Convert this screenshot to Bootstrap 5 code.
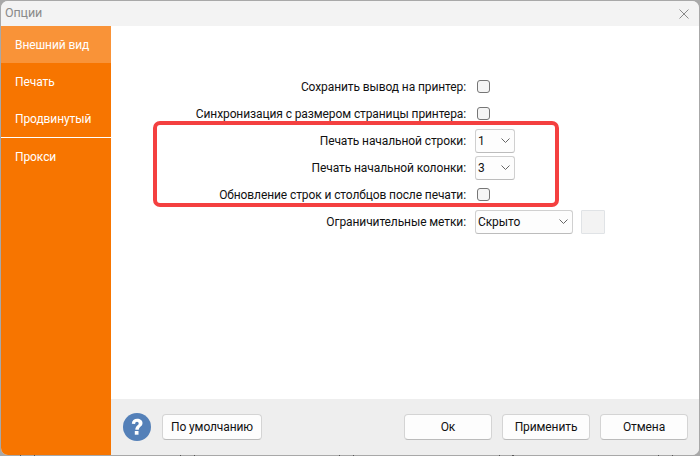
<!DOCTYPE html>
<html lang="ru"><head><meta charset="utf-8">
<link href="https://cdn.jsdelivr.net/npm/bootstrap@5.3.0/dist/css/bootstrap.min.css" rel="stylesheet">
<style>
html,body{width:700px;height:456px;overflow:hidden;margin:0}
body{background:repeating-linear-gradient(90deg,#a8a8a8 0 20px,#555 20px 21px,#a8a8a8 21px 34px,#555 34px 35px,#a8a8a8 35px 159.5px) left bottom/100% 1px no-repeat,#a8a8a8;font-family:Roboto,"Open Sans",sans-serif;font-size:12px;letter-spacing:-.1px;color:#111}
.win{position:absolute;left:1px;top:1px;width:698px;height:454px;border-radius:7px;overflow:hidden;background:#f3f3f3;flex-direction:column}
.tbar{height:25px;padding-left:4px;color:#8a8a8a;font-size:12.500px;background:#f3f3f3;flex:none}
.xbtn{width:30px}
.side{width:110px;background:#f77500;color:#fff;flex:none}
.sitem{height:37px;padding-left:14px}
.sitem.on{background:#f99338}
.sitem.sep{height:38px;border-top:1px solid #fff}
.pane{background:#fff;position:relative}
.formgrid{padding-top:47px}
.frow{height:27px}
.lbl{width:355px;text-align:right;line-height:1}
.ctrl{margin-left:9px;display:flex;align-items:center}
.cb{width:13px;height:13px;border:1px solid #767676;border-radius:3px;background:#f5f5f5;margin-left:2px}
.sel{height:24px;border:1px solid #d0d0d0;border-bottom-color:#bcbcbc;border-radius:3px;background:#fdfdfd;padding:0 4px 0 2px;color:#111}
.sel svg{margin-left:auto}
.w40{width:40px}.w98{width:98px}
.swatch{width:24px;height:24px;background:#f3f3f3;border:1px solid #e0e3e6;margin-left:8px;border-radius:1px}
.redbox{position:absolute;left:42px;top:95px;width:406px;height:86px;border:4px solid #f44040;border-radius:7px;pointer-events:none}
.foot{height:56px;background:#eee;padding:0 11px 0 12px;flex:none}
.fbtn{height:26px;background:#fdfdfd;border:1px solid #d4d4d4;border-bottom-color:#bbb;border-radius:4px;padding:0;font-size:12px;letter-spacing:-.1px;color:#111;display:flex;align-items:center;justify-content:center}
.w100{width:100px}.w88{width:88px}
.pill{margin-left:11px}
.gap9{gap:10px}
</style></head><body>
<div class="win d-flex">
  <div class="tbar d-flex align-items-center justify-content-between"><span>Опции</span>
    <span class="xbtn d-flex justify-content-center"><svg width="10" height="10" viewBox="0 0 10 10"><path d="M.5.5l9 9M9.500.5l-9 9" stroke="#8a8a8a" stroke-width="1" fill="none"/></svg></span></div>
  <div class="d-flex flex-grow-1" style="min-height:0">
    <div class="side">
      <div class="sitem on d-flex align-items-center">Внешний вид</div>
      <div class="sitem d-flex align-items-center">Печать</div>
      <div class="sitem d-flex align-items-center">Продвинутый</div>
      <div class="sitem sep d-flex align-items-center">Прокси</div>
    </div>
    <div class="d-flex flex-column flex-grow-1">
      <div class="pane flex-grow-1">
        <div class="formgrid">
          <div class="frow d-flex align-items-center"><span class="lbl">Сохранить вывод на принтер:</span><span class="ctrl"><span class="cb"></span></span></div>
          <div class="frow d-flex align-items-center"><span class="lbl">Синхронизация с размером страницы принтера:</span><span class="ctrl"><span class="cb"></span></span></div>
          <div class="frow d-flex align-items-center"><span class="lbl">Печать начальной строки:</span><span class="ctrl"><span class="sel w40 d-flex align-items-center">1<svg width="9" height="5" viewBox="0 0 9 5"><path d="M.5.5l4 4 4-4" stroke="#666" fill="none"/></svg></span></span></div>
          <div class="frow d-flex align-items-center"><span class="lbl">Печать начальной колонки:</span><span class="ctrl"><span class="sel w40 d-flex align-items-center">3<svg width="9" height="5" viewBox="0 0 9 5"><path d="M.5.5l4 4 4-4" stroke="#666" fill="none"/></svg></span></span></div>
          <div class="frow d-flex align-items-center"><span class="lbl">Обновление строк и столбцов после печати:</span><span class="ctrl"><span class="cb"></span></span></div>
          <div class="frow d-flex align-items-center"><span class="lbl">Ограничительные метки:</span><span class="ctrl"><span class="sel w98 d-flex align-items-center">Скрыто<svg width="9" height="5" viewBox="0 0 9 5"><path d="M.5.5l4 4 4-4" stroke="#666" fill="none"/></svg></span><span class="swatch"></span></span></div>
        </div>
        <div class="redbox"></div>
      </div>
      <div class="foot d-flex align-items-center">
        <svg width="28" height="28" viewBox="0 0 28 28"><circle cx="14" cy="14" r="14" fill="#5480b8"/><path d="M8.800 10.800c.2-3.300 2.400-5 5.400-5 3.100 0 5.300 1.700 5.300 4.300 0 3.600-3.700 3.800-3.700 6.700h-3.500c0-4 3.400-4.400 3.400-6.300 0-1-.7-1.700-1.700-1.700-1.100 0-1.800.8-1.900 2.200z" fill="#fff"/><rect x="11.800" y="18" width="3.700" height="3.700" fill="#fff"/></svg>
        <button class="fbtn w100 pill">По умолчанию</button>
        <div class="ms-auto d-flex gap9">
          <button class="fbtn w88">Ок</button>
          <button class="fbtn w88">Применить</button>
          <button class="fbtn w88">Отмена</button>
        </div>
      </div>
    </div>
  </div>
</div>
</body></html>
